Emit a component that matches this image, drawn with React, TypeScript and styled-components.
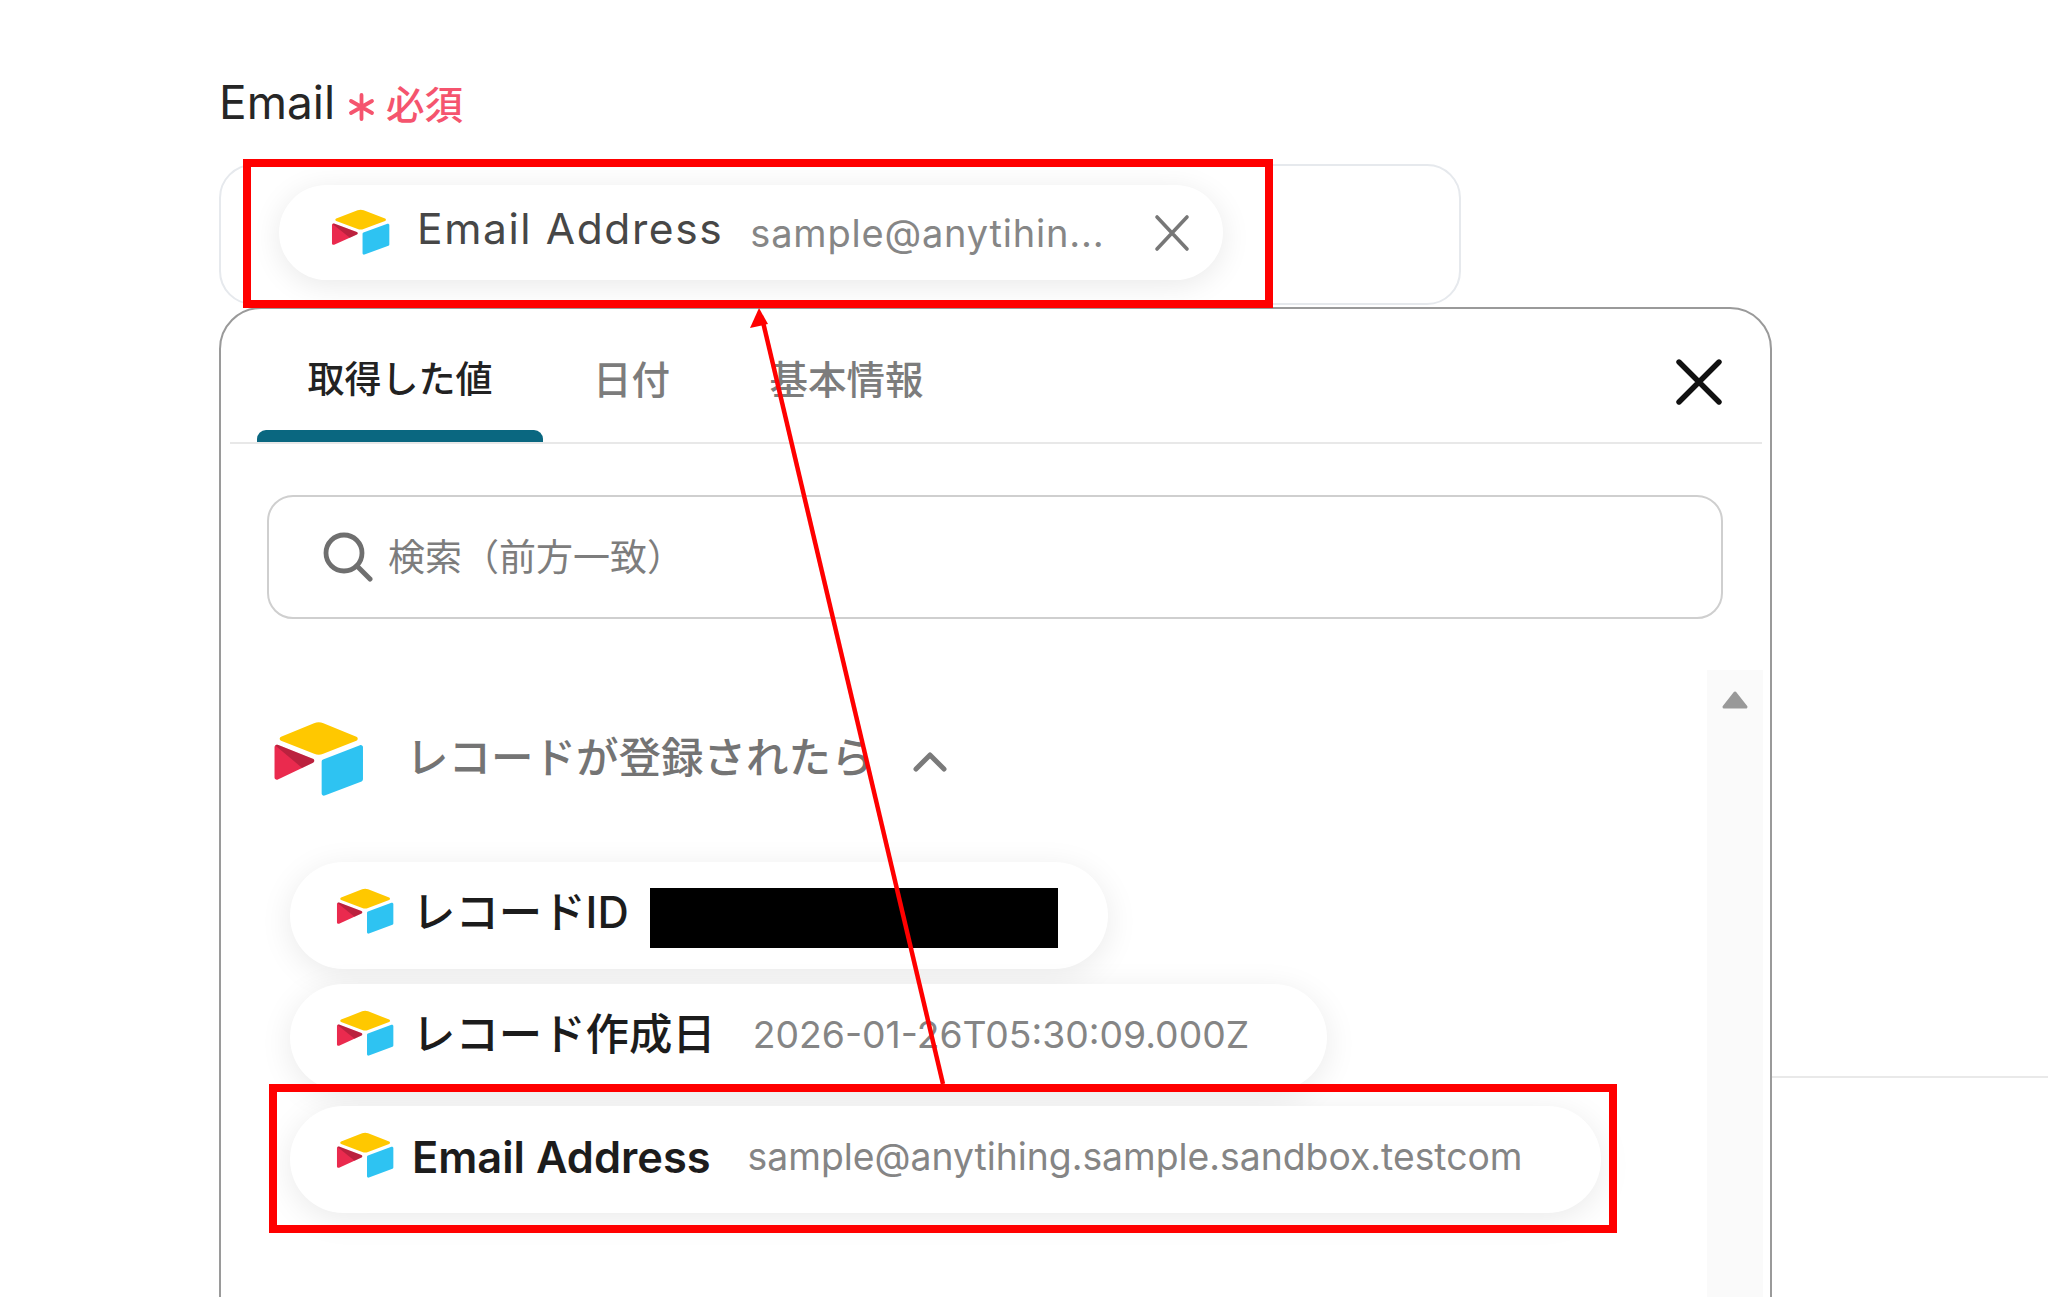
import React from 'react';
import styled, { createGlobalStyle } from 'styled-components';

const GlobalStyle = createGlobalStyle`
  html, body {
    margin: 0;
    padding: 0;
    background: #fff;
  }
  * {
    box-sizing: border-box;
  }
`;

const FONT = `Inter, "Noto Sans CJK JP", "Noto Sans", sans-serif`;

const Page = styled.div`
  position: relative;
  width: 2048px;
  height: 1297px;
  overflow: hidden;
  padding: 76px 0 0 219px;
  background: #fff;
  font-family: ${FONT};
`;
const LabelRow = styled.div`
  display: flex;
  align-items: center;
  height: 52px;
`;
const LabelText = styled.span`
  font-size: 46px;
  color: #262626;
  margin-right: 13px;
`;
const Asterisk = styled.svg`
  width: 27px;
  height: 28px;
  margin: 10px 11px 0 0;
`;
const Required = styled.span`
  font-size: 38.5px;
  font-weight: 500;
  color: #f5546e;
`;
const Field = styled.div`
  width: 1242px;
  height: 141px;
  margin-top: 36px;
  padding: 19px 0 0 58px;
  border: 2px solid #e6e9ed;
  border-radius: 34px;
`;
const TopChip = styled.div`
  display: flex;
  align-items: center;
  width: 944px;
  height: 95px;
  padding-left: 52px;
  border-radius: 48px;
  background: #fff;
  box-shadow: 0 5px 30px rgba(0, 0, 0, 0.09);
`;
const TopChipName = styled.span`
  margin: -9px 0 0 27px;
  font-size: 42.5px;
  letter-spacing: 1.6px;
  color: #474747;
  white-space: nowrap;
`;
const TopChipValue = styled.span`
  margin: 0 0 0 27px;
  font-size: 38px;
  letter-spacing: 0.8px;
  color: #868686;
  white-space: nowrap;
`;
const TopChipClose = styled.svg`
  width: 36px;
  height: 38px;
  margin: 0 0 0 50px;
`;
const Lower = styled.div`
  display: flex;
  align-items: flex-start;
  margin-top: 2px;
`;
const Popup = styled.div`
  flex: none;
  width: 1553px;
  height: 1100px;
  border: 2px solid #9a9a9a;
  border-radius: 42px;
  background: #fff;
  padding: 0 8px 0 9px;
`;
const SideRule = styled.div`
  flex: 1;
  height: 2px;
  margin-top: 769px;
  background: #e9e9e9;
`;
const TabBar = styled.div`
  display: flex;
  align-items: flex-start;
  height: 135px;
  padding-left: 27px;
  border-bottom: 2px solid #e8e8e8;
`;
const Tab = styled.div<{ $active?: boolean; $width: number }>`
  position: relative;
  width: ${p => p.$width}px;
  height: 133px;
  padding-top: 44px;
  text-align: center;
  font-size: ${p => (p.$active ? 37 : 38.5)}px;
  line-height: 54px;
  font-weight: 500;
  color: ${p => (p.$active ? '#222' : '#7c7c7c')};
  white-space: nowrap;
  ${p =>
    p.$active &&
    `
    &::after {
      content: '';
      position: absolute;
      left: 0;
      right: 0;
      bottom: 0;
      height: 12px;
      border-radius: 9px 9px 0 0;
      background: #0a6780;
    }
  `}
`;
const CloseButton = styled.svg`
  width: 46px;
  height: 46px;
  margin: 50px 40px 0 auto;
`;
const SearchBox = styled.div`
  display: flex;
  align-items: center;
  width: 1456px;
  height: 124px;
  margin: 51px 0 0 37px;
  padding-left: 54px;
  border: 2.5px solid #cfcfcf;
  border-radius: 26px;
`;
const SearchIcon = styled.svg`
  width: 50px;
  height: 50px;
`;
const Placeholder = styled.span`
  margin: -5px 0 0 15px;
  font-size: 37px;
  color: #7d7d7d;
  white-space: nowrap;
`;
const ListArea = styled.div`
  display: flex;
  margin-top: 51px;
`;
const ListBody = styled.div`
  flex: none;
  width: 1477px;
`;
const SectionHeader = styled.div`
  display: flex;
  align-items: center;
  height: 77px;
  margin-top: 51px;
  padding-left: 43px;
`;
const SectionTitle = styled.span`
  margin: -10px 0 0 42px;
  font-size: 42.5px;
  font-weight: 500;
  color: #747474;
  white-space: nowrap;
`;
const Chevron = styled.svg`
  width: 36px;
  height: 24px;
  margin: 3px 0 0 38px;
`;
const ChipList = styled.div`
  display: flex;
  flex-direction: column;
  gap: 15px;
  margin-top: 64px;
  padding-left: 60px;
`;
const ValueChip = styled.div<{ $width: number }>`
  display: flex;
  align-items: center;
  width: ${p => p.$width}px;
  height: 107px;
  padding: 0 0 8px 46px;
  border-radius: 54px;
  background: #fff;
  box-shadow: 0 6px 32px rgba(0, 0, 0, 0.085);
`;
const ChipName = styled.span<{ $cjk?: boolean }>`
  margin: ${p => (p.$cjk ? '-5px' : '2px')} 0 0 18px;
  font-size: 43.4px;
  font-weight: ${p => (p.$cjk ? 500 : 600)};
  color: #1c1c1c;
  white-space: nowrap;
`;
const ChipValue = styled.span`
  margin: 2px 0 0 37px;
  font-size: 37.3px;
  color: #858585;
  white-space: nowrap;
`;
const Redacted = styled.div`
  width: 408px;
  height: 60px;
  margin: 13px 0 0 21px;
  background: #000;
`;
const ScrollTrack = styled.div`
  flex: none;
  width: 56px;
  height: 640px;
  padding-top: 20px;
  text-align: center;
  background: #fafafa;
`;
const ScrollArrow = styled.svg`
  width: 28px;
  height: 20px;
  display: block;
  margin: 0 auto;
`;
const Highlight = styled.div<{ $x: number; $y: number; $w: number; $h: number }>`
  position: absolute;
  left: ${p => p.$x}px;
  top: ${p => p.$y}px;
  width: ${p => p.$w}px;
  height: ${p => p.$h}px;
  border: 8px solid #ff0000;
`;
const ArrowOverlay = styled.svg`
  position: absolute;
  left: 0;
  top: 0;
  width: 2048px;
  height: 1297px;
  pointer-events: none;
`;

const LogoSvg = styled.svg<{ $w: number; $h: number }>`
  flex: none;
  width: ${p => p.$w}px;
  height: ${p => p.$h}px;
`;

// airtable mark
const Logo: React.FC<{ w: number; h: number }> = ({ w, h }) => (
  <LogoSvg $w={w} $h={h} viewBox="8 8 182 155" preserveAspectRatio="none">
    <path fill="#ffc800" d="M90.039 12.368 24.079 39.66c-3.667 1.519-3.63 6.729.062 8.192l66.235 26.266a24.58 24.58 0 0 0 18.12 0l66.236-26.266c3.69-1.463 3.73-6.673.062-8.192l-65.96-27.292a24.58 24.58 0 0 0-18.795 0" />
    <path fill="#2ec3f2" d="M105.312 88.46v65.617c0 3.12 3.147 5.258 6.048 4.108l73.806-28.648a4.42 4.42 0 0 0 2.79-4.108V60.813c0-3.121-3.147-5.258-6.048-4.108l-73.806 28.648a4.42 4.42 0 0 0-2.79 4.108" />
    <path fill="#ea2a4e" d="M88.078 91.846l-21.904 10.576-2.224 1.075-46.238 22.155c-2.93 1.414-6.672-.722-6.672-3.978V60.088c0-1.178.604-2.195 1.414-2.96a5 5 0 0 1 1.12-.84c1.104-.663 2.68-.84 4.02-.31L87.71 83.76c3.564 1.414 3.844 6.408.368 8.087" />
    <path fill="rgba(0,0,0,0.2)" d="M88.078 91.846l-21.904 10.576-53.72-45.295a5 5 0 0 1 1.12-.839c1.104-.663 2.68-.84 4.02-.31L87.71 83.76c3.564 1.414 3.844 6.408.368 8.087" />
  </LogoSvg>
);

const App: React.FC = () => {
  return (
    <Page>
      <GlobalStyle />
      <LabelRow>
        <LabelText>Email</LabelText>
        <Asterisk viewBox="0 0 27 28">
          <path d="M13.5 2v24M3 8l21 12M24 8L3 20" stroke="#f5546e" strokeWidth="3.8" strokeLinecap="round" />
        </Asterisk>
        <Required>必須</Required>
      </LabelRow>
      <Field>
        <TopChip>
          <Logo w={59} h={47} />
          <TopChipName>Email Address</TopChipName>
          <TopChipValue>sample@anytihin...</TopChipValue>
          <TopChipClose viewBox="0 0 36 38">
            <path d="M3 3l30 32M33 3L3 35" stroke="#777" strokeWidth="3.6" strokeLinecap="round" />
          </TopChipClose>
        </TopChip>
      </Field>
      <Lower>
        <Popup>
          <TabBar>
            <Tab $active $width={286}>取得した値</Tab>
            <Tab $width={177}>日付</Tab>
            <Tab $width={253}>基本情報</Tab>
            <CloseButton viewBox="0 0 46 46">
              <path d="M3 3l40 40M43 3L3 43" stroke="#111" strokeWidth="5.4" strokeLinecap="round" />
            </CloseButton>
          </TabBar>
          <SearchBox>
            <SearchIcon viewBox="0 0 50 50">
              <circle cx="21" cy="21" r="18" fill="none" stroke="#6f6f6f" strokeWidth="4.8" />
              <path d="M34 34l13 13" stroke="#6f6f6f" strokeWidth="5" strokeLinecap="round" />
            </SearchIcon>
            <Placeholder>検索（前方一致）</Placeholder>
          </SearchBox>
          <ListArea>
            <ListBody>
              <SectionHeader>
                <Logo w={91} h={77} />
                <SectionTitle>レコードが登録されたら</SectionTitle>
                <Chevron viewBox="0 0 36 24">
                  <path d="M4 20L18 6l14 14" fill="none" stroke="#7a7a7a" strokeWidth="5" strokeLinecap="round" strokeLinejoin="round" />
                </Chevron>
              </SectionHeader>
              <ChipList>
                <ValueChip $width={818}>
                  <Logo w={58} h={47} />
                  <ChipName $cjk>レコードID</ChipName>
                  <Redacted />
                </ValueChip>
                <ValueChip $width={1037}>
                  <Logo w={58} h={47} />
                  <ChipName $cjk>レコード作成日</ChipName>
                  <ChipValue>2026-01-26T05:30:09.000Z</ChipValue>
                </ValueChip>
                <ValueChip $width={1311}>
                  <Logo w={58} h={47} />
                  <ChipName>Email Address</ChipName>
                  <ChipValue>sample@anytihing.sample.sandbox.testcom</ChipValue>
                </ValueChip>
              </ChipList>
            </ListBody>
            <ScrollTrack>
              <ScrollArrow viewBox="0 0 28 20">
                <path d="M14 3L25 17H3z" fill="#999" stroke="#999" strokeWidth="3" strokeLinejoin="round" />
              </ScrollArrow>
            </ScrollTrack>
          </ListArea>
        </Popup>
        <SideRule />
      </Lower>
      <Highlight $x={243} $y={159} $w={1030} $h={149} />
      <Highlight $x={269} $y={1084} $w={1348} $h={149} />
      <ArrowOverlay viewBox="0 0 2048 1297">
        <line x1="943" y1="1084" x2="763" y2="322" stroke="#ff0000" strokeWidth="4.5" />
        <path d="M759 308l-9 20 18-4z" fill="#ff0000" />
      </ArrowOverlay>
    </Page>
  );
};

export default App;
